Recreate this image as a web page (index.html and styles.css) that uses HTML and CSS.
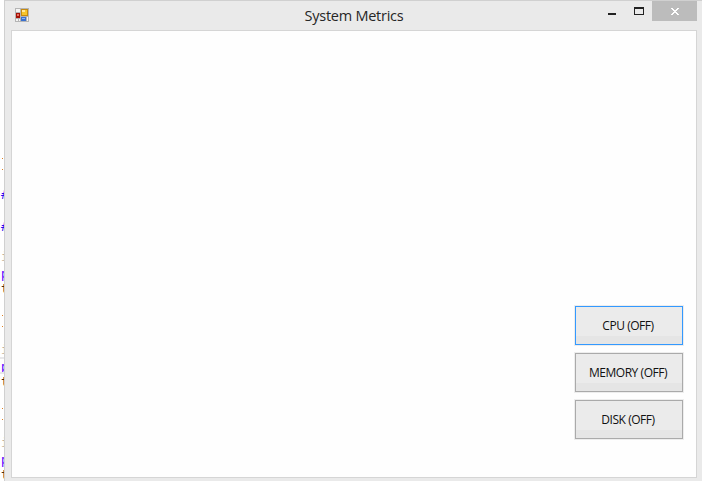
FILE: index.html
```html
<!DOCTYPE html>
<html lang="en">
<head>
<meta charset="utf-8">
<title>System Metrics</title>
<link rel="stylesheet" href="styles.css">
</head>
<body>
<div class="editor" aria-hidden="true">
  <i class="dot" style="top:158px"></i>
  <i class="dot" style="top:169px"></i>
  <span class="hash" style="top:195px">#</span>
  <span class="hash" style="top:227px">#</span>
  <span class="item" style="top:257px">i</span>
  <span class="key" style="top:274px">p</span>
  <span class="type" style="top:289px">t</span>
  <i class="dot" style="top:315px"></i>
  <i class="dot" style="top:326px"></i>
  <span class="item" style="top:350px">i</span>
  <i class="rule" style="top:357px"></i>
  <span class="key" style="top:367px">p</span>
  <i class="rule" style="top:372px"></i>
  <span class="type" style="top:382px">t</span>
  <i class="dot" style="top:408px"></i>
  <i class="dot" style="top:419px"></i>
  <span class="item" style="top:443px">i</span>
  <span class="key" style="top:460px">p</span>
  <span class="type" style="top:475px">t</span>
</div>
<main class="window">
  <header class="titlebar">
    <svg class="app-icon" width="14" height="14" viewBox="0 0 14 14" shape-rendering="crispEdges">
      <path fill="#b5b5b5" d="M0 0h14v14H0z"/>
      <path fill="#f4f4f4" d="M1 1h4v3H1zM1 11h2v2H1zM4 11h1v2H4zM12 9h1v4h-1z"/>
      <path fill="#a51208" d="M1 5h4v5H1z"/><path fill="#e87060" d="M2 6h2v2H2z"/>
      <path fill="#c58a10" d="M6 1h7v7H6z"/><path fill="#f6c52b" d="M7 2h5v5H7z"/><path fill="#ffe99a" d="M7 2h3v2H7z"/>
      <path fill="#3970cf" d="M6 9h5v4H6z"/><path fill="#8bb7f5" d="M7 10h3v1H7z"/>
    </svg>
    <h1 class="title">System Metrics</h1>
    <div class="controls">
      <span class="control minimize"><svg width="8" height="2"><path d="M0 0h8v2H0z" fill="#222"/></svg></span>
      <span class="control maximize"><svg width="10" height="8" shape-rendering="crispEdges"><path d="M0 0h10v8H0zM1 2v5h8V2z" fill="#222" fill-rule="evenodd"/></svg></span>
      <span class="control close"><svg width="8" height="7" shape-rendering="crispEdges"><path d="M0 0h2v1h1v1h2V1h1V0h2v1H7v1H6v1H5v1h1v1h1v1h1v1H6V6H5V5H3v1H2v1H0V6h1V5h1V4h1V3H2V2H1V1H0z" fill="#fff"/></svg></span>
    </div>
  </header>
  <section class="client">
    <button class="toggle focused"><span>CPU (OFF)</span></button>
    <button class="toggle"><span>MEMORY (OFF)</span></button>
    <button class="toggle"><span>DISK (OFF)</span></button>
  </section>
</main>
</body>
</html>
```

FILE: styles.css
```css
* { box-sizing: border-box; }
body { margin: 0; width: 702px; height: 481px; overflow: hidden; background: #fff; position: relative; }
.editor { position: absolute; inset: 0; font: 12px "DejaVu Sans Mono", monospace; }
.editor span { position: absolute; left: 1px; line-height: 14px; margin-top: -7px; }
.editor .dot { position: absolute; left: 2px; width: 1px; height: 1px; background: #e08020; }
.editor .rule { position: absolute; left: 0; width: 4px; height: 2px; background: #e8e8ea; }
.hash { color: #2a08f0; }
.key { color: #5a00ff; }
.item { color: #c4b29c; }
.type { color: #4a2b10; }
.window { position: relative; margin-left: 4px; height: 481px; padding: 0 5px 3px 6px; border: solid #d0d0d0; border-width: 1px 0 0 1px; background: #eaeaea; display: flex; flex-direction: column; }
.titlebar { height: 29px; flex: none; display: grid; grid-template-columns: 104px 1fr 104px; }
.app-icon { margin: 7px 0 0 4px; }
.title { margin: 4px 0 0; text-align: center; font: 14.5px/21px "Open Sans", sans-serif; letter-spacing: -.25px; color: #262626; }
.controls { display: flex; justify-content: flex-end; height: 20px; }
.control { width: 27px; display: flex; align-items: center; justify-content: center; }
.minimize { padding-top: 5px; }
.close { width: 45px; background: #bcbcbc; }
.client { flex: 1; border: 1px solid #d5d5d5; background: #fefefe; display: flex; flex-direction: column; align-items: flex-end; justify-content: flex-end; gap: 6px; padding: 0 12px 37px 0; }
.toggle { width: 110px; height: 41px; border: 1px solid #ededed; padding: 0; background: #aaa; display: flex; }
.toggle span { flex: 1; margin: 1px; height: 37px; line-height: 37px; padding-right: 2px; background: linear-gradient(#ebebeb 0 29px, #e5e5e5 29px); font-family: "Open Sans", sans-serif; font-size: 12px; letter-spacing: -.45px; color: #111; }
.toggle.focused { background: #3399ff; }
```
